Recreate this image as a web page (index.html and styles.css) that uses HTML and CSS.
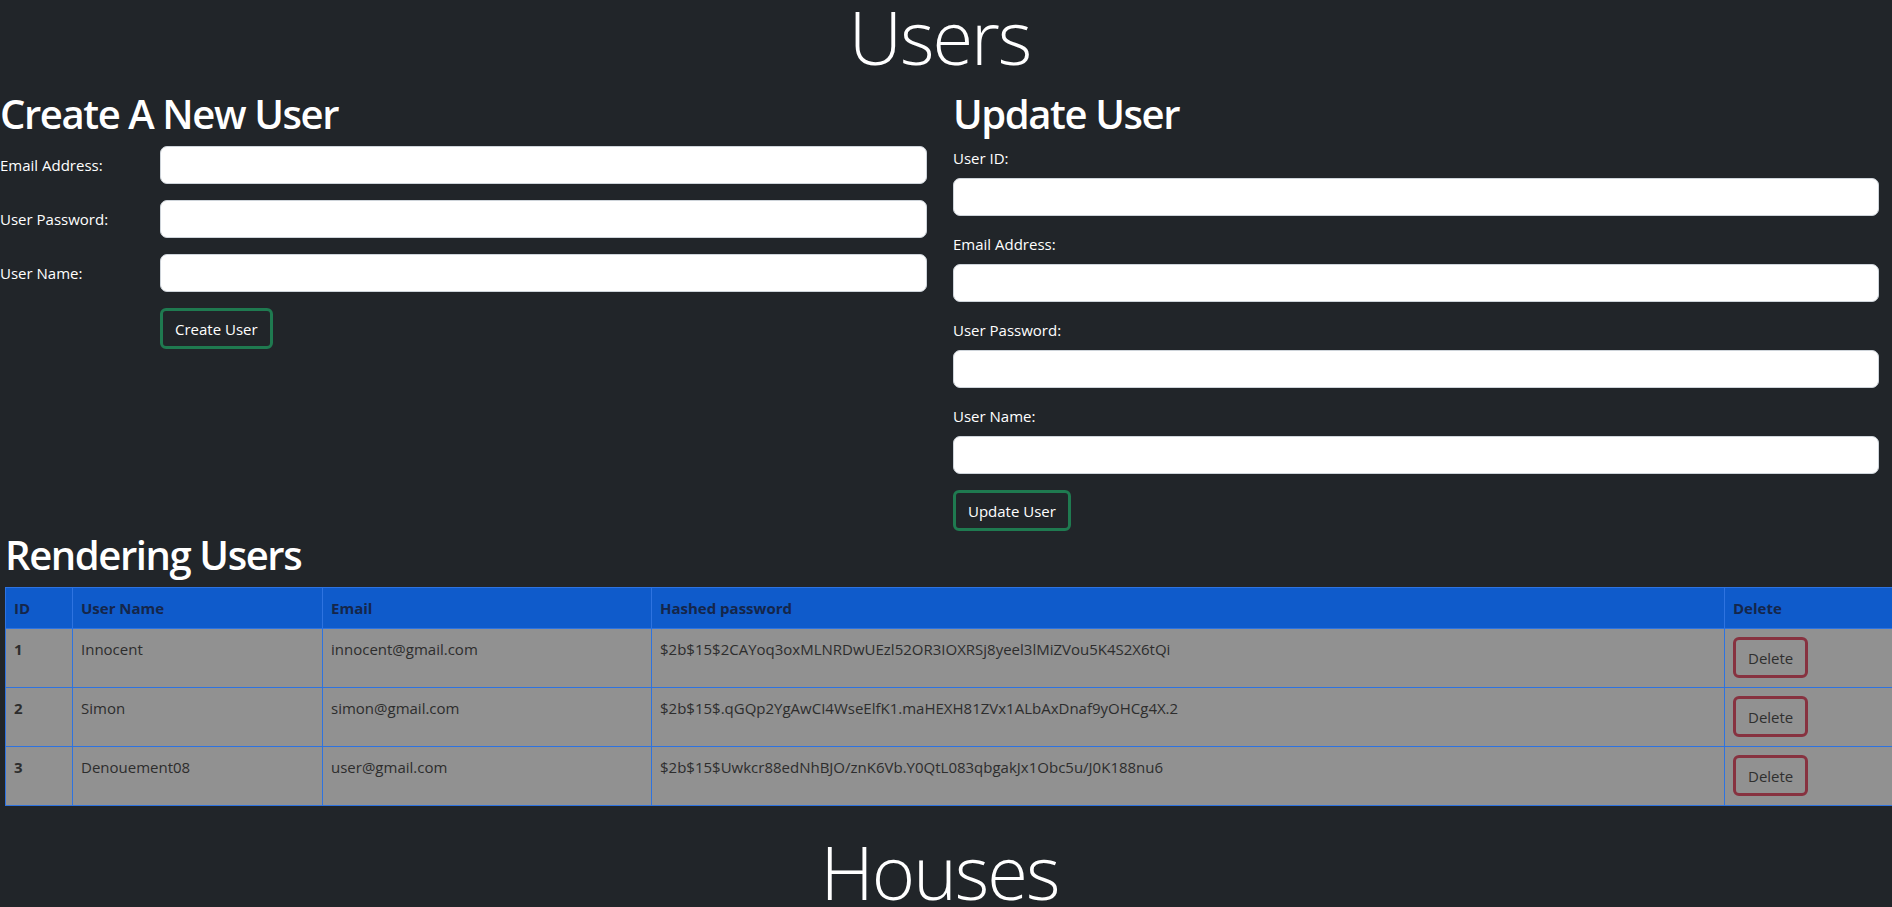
FILE: index.html
```html
<!DOCTYPE html>
<html lang="en">
<head>
<meta charset="utf-8">
<title>Users</title>
<link rel="stylesheet" href="styles.css">
</head>
<body>
  <h1 class="page-title">Users</h1>
  <div class="forms">
    <section class="create">
      <h2 class="section-title">Create A New User</h2>
      <form class="inline-form">
        <div class="inline-row">
          <label class="inline-label" for="c-email">Email Address:</label>
          <input class="field" id="c-email" type="text">
        </div>
        <div class="inline-row">
          <label class="inline-label" for="c-pass">User Password:</label>
          <input class="field" id="c-pass" type="text">
        </div>
        <div class="inline-row">
          <label class="inline-label" for="c-name">User Name:</label>
          <input class="field" id="c-name" type="text">
        </div>
        <div class="inline-row">
          <span class="inline-label"></span>
          <button class="btn btn-success" type="button">Create User</button>
        </div>
      </form>
    </section>
    <section class="update">
      <h2 class="section-title">Update User</h2>
      <form class="stack-form">
        <div class="group">
          <label class="stack-label" for="u-id">User ID:</label>
          <input class="field" id="u-id" type="text">
        </div>
        <div class="group">
          <label class="stack-label" for="u-email">Email Address:</label>
          <input class="field" id="u-email" type="text">
        </div>
        <div class="group">
          <label class="stack-label" for="u-pass">User Password:</label>
          <input class="field" id="u-pass" type="text">
        </div>
        <div class="group">
          <label class="stack-label" for="u-name">User Name:</label>
          <input class="field" id="u-name" type="text">
        </div>
        <button class="btn btn-success" type="button">Update User</button>
      </form>
    </section>
  </div>

  <section class="listing">
    <h2 class="section-title">Rendering Users</h2>
    <table class="users-table">
      <colgroup>
        <col class="c-id"><col class="c-name"><col class="c-email"><col class="c-hash"><col class="c-del">
      </colgroup>
      <thead>
        <tr><th>ID</th><th>User Name</th><th>Email</th><th>Hashed password</th><th>Delete</th></tr>
      </thead>
      <tbody>
        <tr>
          <td class="id">1</td><td>Innocent</td><td>innocent@gmail.com</td>
          <td>$2b$15$2CAYoq3oxMLNRDwUEzl52OR3IOXRSj8yeel3lMiZVou5K4S2X6tQi</td>
          <td><button class="btn btn-danger" type="button">Delete</button></td>
        </tr>
        <tr>
          <td class="id">2</td><td>Simon</td><td>simon@gmail.com</td>
          <td>$2b$15$.qGQp2YgAwCI4WseElfK1.maHEXH81ZVx1ALbAxDnaf9yOHCg4X.2</td>
          <td><button class="btn btn-danger" type="button">Delete</button></td>
        </tr>
        <tr>
          <td class="id">3</td><td>Denouement08</td><td>user@gmail.com</td>
          <td>$2b$15$Uwkcr88edNhBJO/znK6Vb.Y0QtL083qbgakJx1Obc5u/J0K188nu6</td>
          <td><button class="btn btn-danger" type="button">Delete</button></td>
        </tr>
      </tbody>
    </table>
  </section>

  <h1 class="page-title houses">Houses</h1>
</body>
</html>
```

FILE: styles.css
```css
* { box-sizing: border-box; }

html, body {
  margin: 0;
  padding: 0;
  background: #212529;
  color: #ffffff;
  font-family: "Open Sans", "Noto Sans", sans-serif;
  font-size: 15px;
  line-height: 24px;
  overflow: hidden;
}

.page-title {
  margin: 0 0 16px;
  padding-right: 13px;
  text-align: center;
  font-weight: 300;
  font-size: 74px;
  line-height: 1;
  letter-spacing: -2px;
}

.houses {
  margin-top: 29px;
}

.forms {
  display: flex;
  gap: 26px;
  padding-right: 13px;
}

.create { width: 927px; }
.update { flex: 1; }

.section-title {
  margin: 0 0 8px;
  font-size: 40px;
  line-height: 48px;
  font-weight: 600;
  letter-spacing: -1.4px;
}

.inline-row {
  display: flex;
  align-items: flex-start;
  margin-bottom: 16px;
}

.inline-label {
  width: 160px;
  flex: none;
  padding-top: 7px;
  line-height: 24px;
}

.field {
  display: block;
  flex: 1;
  width: 100%;
  height: 38px;
  background: #ffffff;
  border: 1px solid #ced4da;
  border-radius: 7px;
  font: inherit;
}

.group { margin-bottom: 16px; }

.stack-label {
  display: block;
  margin-bottom: 8px;
  line-height: 24px;
}

.btn {
  font: inherit;
  line-height: 24px;
  height: 41px;
  padding: 0 12px;
  border: 3px solid;
  border-radius: 6px;
  background: transparent;
  cursor: pointer;
}

.btn-success {
  color: #ffffff;
  border-color: #1f7a50;
}

.btn-danger {
  color: #2f2f2f;
  border-color: #873240;
}

.listing {
  padding-left: 5px;
}

.users-table {
  width: 1887px;
  table-layout: fixed;
  border-collapse: collapse;
  border: 1px solid #2e73e0;
}

.c-id { width: 67px; }
.c-name { width: 250px; }
.c-email { width: 329px; }
.c-hash { width: 1073px; }
.c-del { width: 168px; }

.users-table th,
.users-table td {
  border: 1px solid #2e73e0;
  padding: 8px;
  text-align: left;
  vertical-align: top;
  line-height: 24px;
}

.users-table thead th {
  background: #0f5bcb;
  color: #15264a;
  font-weight: 700;
  height: 41px;
}

.users-table tbody td {
  background: #919191;
  color: #2d2d2d;
  height: 59px;
}

.users-table td.id {
  font-weight: 700;
}
```
